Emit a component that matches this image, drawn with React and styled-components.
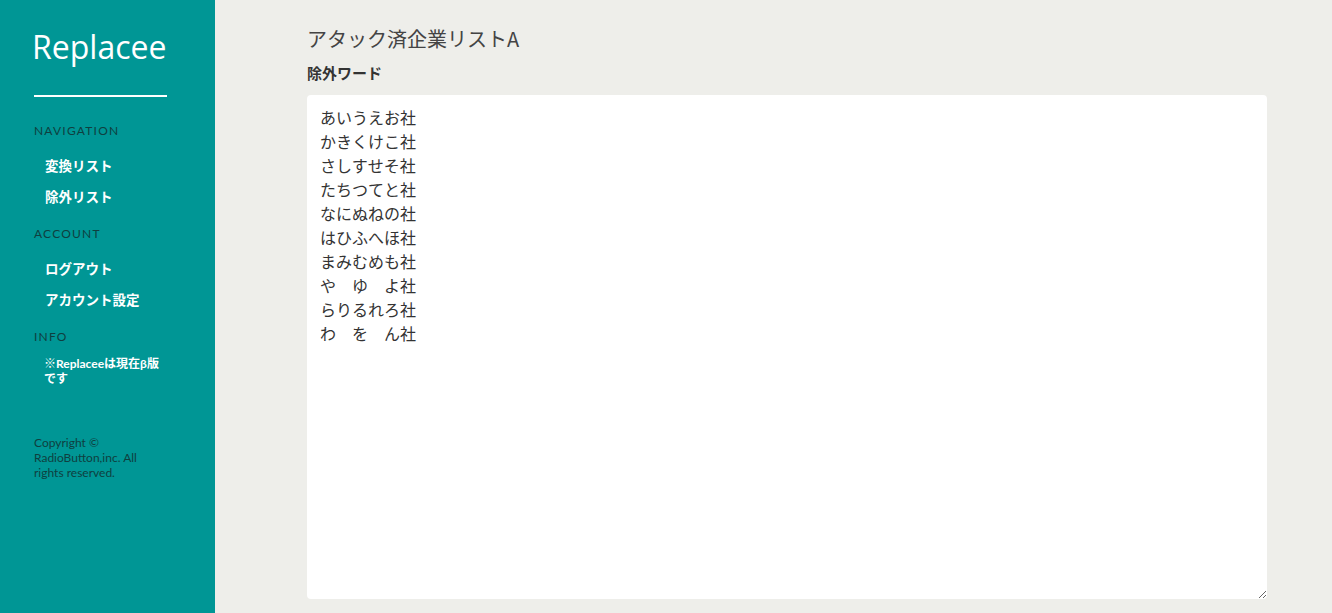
import styled, { createGlobalStyle } from "styled-components";

const GlobalStyle = createGlobalStyle`
  * { box-sizing: border-box; }
  html, body { margin: 0; padding: 0; height: 100%; }
  body {
    font-family: "Noto Sans", "Noto Sans CJK JP", sans-serif;
    background: #eeeeea;
  }
`;

const words = [
  "あいうえお社",
  "かきくけこ社",
  "さしすせそ社",
  "たちつてと社",
  "なにぬねの社",
  "はひふへほ社",
  "まみむめも社",
  "や　ゆ　よ社",
  "らりるれろ社",
  "わ　を　ん社",
];

const sections = [
  { title: "NAVIGATION", links: ["変換リスト", "除外リスト"] },
  { title: "ACCOUNT", links: ["ログアウト", "アカウント設定"] },
];

function App() {
  return (
    <>
      <GlobalStyle />
      <Layout>
        <Sidebar>
          <Logo>Replacee</Logo>
          <Divider />
          {sections.map((s) => (
            <Section key={s.title}>
              <SectionTitle>{s.title}</SectionTitle>
              <NavList>
                {s.links.map((l) => (
                  <NavLink key={l} href="#">
                    {l}
                  </NavLink>
                ))}
              </NavList>
            </Section>
          ))}
          <Section>
            <SectionTitle>INFO</SectionTitle>
            <InfoText>※Replaceeは現在β版です</InfoText>
          </Section>
          <Copyright>Copyright © RadioButton,inc. All rights reserved.</Copyright>
        </Sidebar>

        <Main>
          <PageTitle>アタック済企業リストA</PageTitle>
          <Label>除外ワード</Label>
          <WordArea defaultValue={words.join("\n")} />
        </Main>
      </Layout>
    </>
  );
}

export default App;

const Layout = styled.div`
  display: flex;
  min-height: 613px;
`;

const Sidebar = styled.aside`
  width: 215px;
  flex-shrink: 0;
  background: #009695;
  padding: 26px 0 0 34px;
  font-family: "Nunito", "Lato", "Noto Sans CJK JP", sans-serif;
`;

const Logo = styled.div`
  font-family: "Open Sans", sans-serif;
  font-weight: 400;
  font-size: 32px;
  line-height: 42px;
  color: #fff;
  margin-left: -2px;
`;

const Divider = styled.hr`
  width: 133px;
  height: 2px;
  border: none;
  background: #fff;
  margin: 27px 0 26px;
`;

const Section = styled.div`
  margin-bottom: 20px;
`;

const SectionTitle = styled.div`
  font-family: "Lato", sans-serif;
  font-size: 12px;
  letter-spacing: 1.2px;
  color: #0f3f40;
  line-height: 16px;
  margin-bottom: 16px;
`;

const NavList = styled.div`
  display: flex;
  flex-direction: column;
  gap: 11px;
  padding-left: 11px;
`;

const NavLink = styled.a`
  font-family: "Noto Sans CJK JP", sans-serif;
  font-weight: 700;
  font-size: 13.5px;
  line-height: 20px;
  color: #fff;
  text-decoration: none;
`;

const InfoText = styled.div`
  font-family: "Lato", "Noto Sans CJK JP", sans-serif;
  font-weight: 700;
  font-size: 12px;
  line-height: 15px;
  color: #fff;
  width: 125px;
  padding-left: 10px;
  margin-top: -5px;
`;

const Copyright = styled.div`
  font-family: "Lato", sans-serif;
  font-size: 12px;
  line-height: 15px;
  color: #0f3f40;
  width: 115px;
  margin-top: 49px;
`;

const Main = styled.main`
  flex: 1;
  padding: 24px 65px 14px 92px;
  display: flex;
  flex-direction: column;
`;

const PageTitle = styled.h1`
  margin: 0;
  font-family: "Noto Sans CJK JP", sans-serif;
  font-weight: 400;
  font-size: 20px;
  line-height: 30px;
  color: #444;
`;

const Label = styled.label`
  font-family: "Noto Sans CJK JP", sans-serif;
  font-weight: 700;
  font-size: 15px;
  line-height: 20px;
  color: #333;
  margin: 9px 0 12px;
`;

const WordArea = styled.textarea`
  width: 960px;
  height: 504px;
  border: none;
  border-radius: 4px;
  background: #fff;
  padding: 10px 13px;
  font-family: "Noto Sans CJK JP", sans-serif;
  font-size: 16px;
  line-height: 24px;
  color: #333;
  outline: none;
  resize: both;
`;
